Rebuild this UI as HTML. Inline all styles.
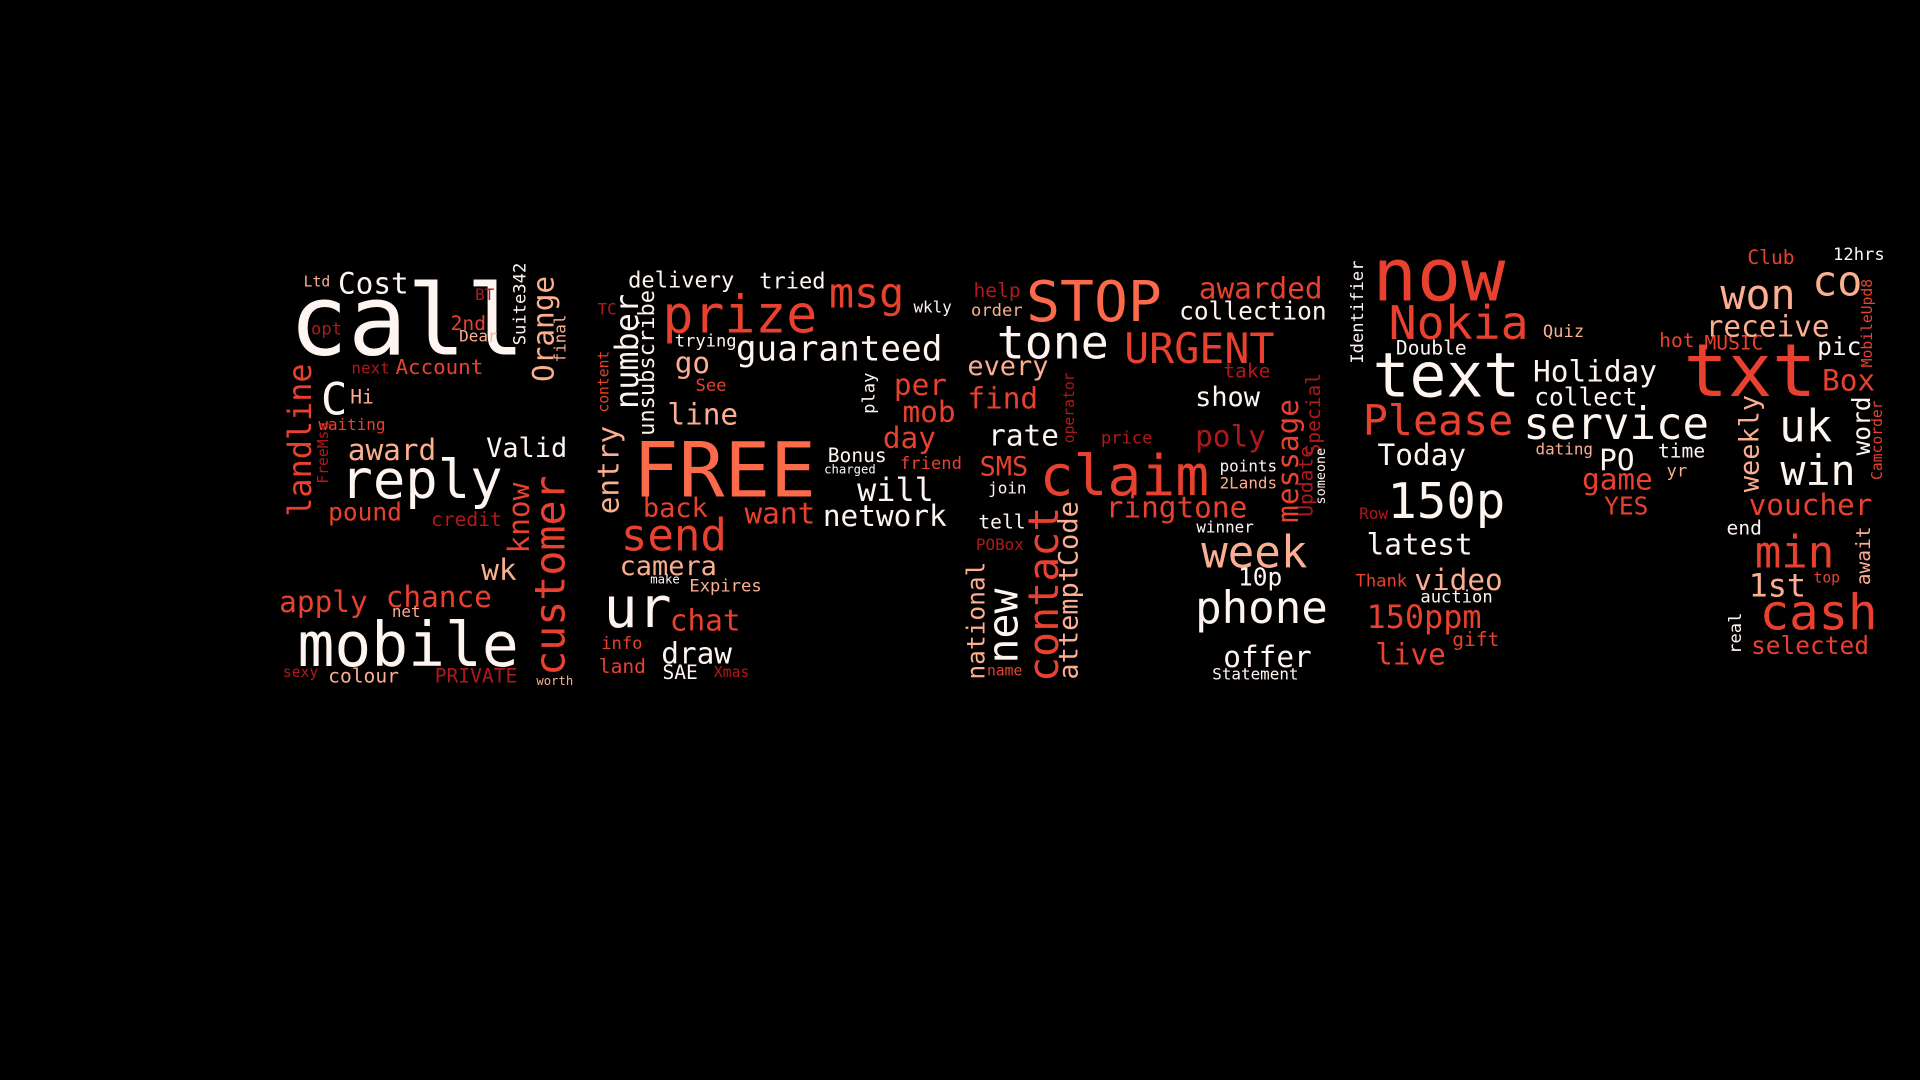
<!DOCTYPE html>
<html><head><meta charset="utf-8"><style>
html,body{margin:0;padding:0;background:#000;width:1920px;height:1080px;overflow:hidden}
#c{position:absolute;left:0;top:0;width:1568px;height:882px;transform:scale(1.22449);transform-origin:0 0;font-family:"DejaVu Sans Mono","Liberation Mono",monospace}
#c span{position:absolute;line-height:1;white-space:nowrap;transform:translateY(-0.845em)}
#c span.v{transform-origin:0 0;transform:rotate(-90deg)}
.w{color:#fff5f0}.p{color:#fcae91}.m{color:#fb6a4a}.r{color:#e8412f}.d{color:#b0191b}
</style></head><body><div id="c">
<span class="w" style="left:236px;top:290px;font-size:80px">call</span>
<span class="w" style="left:276px;top:240px;font-size:24px">Cost</span>
<span class="p" style="left:248px;top:234px;font-size:12px">Ltd</span>
<span class="v p" style="left:432px;top:312px;font-size:24px">Orange</span>
<span class="v w" style="left:418px;top:282px;font-size:14px">Suite342</span>
<span class="v p" style="left:452px;top:296px;font-size:13px">final</span>
<span class="d" style="left:388px;top:246px;font-size:13px">BT</span>
<span class="r" style="left:368px;top:270px;font-size:16px">2nd</span>
<span class="p" style="left:375px;top:280px;font-size:13px">Dear</span>
<span class="d" style="left:254px;top:274px;font-size:14px">opt</span>
<span class="d" style="left:287px;top:306px;font-size:13px">next</span>
<span class="r" style="left:323px;top:307px;font-size:17px">Account</span>
<span class="w" style="left:262px;top:340px;font-size:36px">C</span>
<span class="p" style="left:286px;top:330px;font-size:16px">Hi</span>
<span class="v r" style="left:233px;top:422px;font-size:26px">landline</span>
<span class="v d" style="left:258px;top:395px;font-size:12px">FreeMsg</span>
<span class="r" style="left:260px;top:352px;font-size:13px">waiting</span>
<span class="p" style="left:284px;top:376px;font-size:24px">award</span>
<span class="w" style="left:397px;top:375px;font-size:22px">Valid</span>
<span class="w" style="left:278px;top:408px;font-size:44px">reply</span>
<span class="r" style="left:268px;top:425px;font-size:20px">pound</span>
<span class="d" style="left:352px;top:430px;font-size:16px">credit</span>
<span class="v r" style="left:412px;top:452px;font-size:24px">know</span>
<span class="v r" style="left:433px;top:552px;font-size:34px">customer</span>
<span class="p" style="left:393px;top:474px;font-size:24px">wk</span>
<span class="r" style="left:228px;top:500px;font-size:24px">apply</span>
<span class="r" style="left:315px;top:496px;font-size:24px">chance</span>
<span class="w" style="left:243px;top:544px;font-size:50px">mobile</span>
<span class="p" style="left:320px;top:505px;font-size:13px">net</span>
<span class="d" style="left:231px;top:553px;font-size:12px">sexy</span>
<span class="p" style="left:268px;top:558px;font-size:16px">colour</span>
<span class="d" style="left:355px;top:558px;font-size:16px">PRIVATE</span>
<span class="p" style="left:438px;top:561px;font-size:10px">worth</span>

<span class="w" style="left:513px;top:236px;font-size:18px">delivery</span>
<span class="w" style="left:620px;top:237px;font-size:18px">tried</span>
<span class="r" style="left:541px;top:272px;font-size:42px">prize</span>
<span class="r" style="left:677px;top:252px;font-size:34px">msg</span>
<span class="w" style="left:746px;top:256px;font-size:13px">wkly</span>
<span class="v w" style="left:500px;top:334px;font-size:26px">number</span>
<span class="d" style="left:488px;top:258px;font-size:13px">TC</span>
<span class="w" style="left:551px;top:284px;font-size:14px">trying</span>
<span class="w" style="left:601px;top:295px;font-size:28px">guaranteed</span>
<span class="p" style="left:551px;top:305px;font-size:24px">go</span>
<span class="r" style="left:568px;top:320px;font-size:14px">See</span>
<span class="v r" style="left:487px;top:337px;font-size:12px">content</span>
<span class="v w" style="left:520px;top:356px;font-size:18px">unsubscribe</span>
<span class="v w" style="left:703px;top:338px;font-size:14px">play</span>
<span class="r" style="left:730px;top:323px;font-size:24px">per</span>
<span class="p" style="left:545px;top:347px;font-size:24px">line</span>
<span class="r" style="left:737px;top:345px;font-size:24px">mob</span>
<span class="v p" style="left:485px;top:420px;font-size:24px">entry</span>
<span class="m" style="left:517px;top:406px;font-size:62px">FREE</span>
<span class="r" style="left:721px;top:366px;font-size:24px">day</span>
<span class="w" style="left:676px;top:378px;font-size:16px">Bonus</span>
<span class="r" style="left:735px;top:384px;font-size:14px">friend</span>
<span class="w" style="left:673px;top:388px;font-size:10px">charged</span>
<span class="w" style="left:700px;top:410px;font-size:26px">will</span>
<span class="r" style="left:525px;top:424px;font-size:22px">back</span>
<span class="r" style="left:608px;top:428px;font-size:24px">want</span>
<span class="w" style="left:672px;top:430px;font-size:24px">network</span>
<span class="r" style="left:507px;top:451px;font-size:36px">send</span>
<span class="p" style="left:506px;top:471px;font-size:22px">camera</span>
<span class="w" style="left:531px;top:478px;font-size:10px">make</span>
<span class="p" style="left:563px;top:484px;font-size:14px">Expires</span>
<span class="w" style="left:493px;top:512px;font-size:46px">ur</span>
<span class="r" style="left:547px;top:515px;font-size:24px">chat</span>
<span class="r" style="left:491px;top:531px;font-size:14px">info</span>
<span class="w" style="left:540px;top:542px;font-size:24px">draw</span>
<span class="r" style="left:489px;top:550px;font-size:16px">land</span>
<span class="w" style="left:541px;top:555px;font-size:16px">SAE</span>
<span class="d" style="left:583px;top:553px;font-size:12px">Xmas</span>

<span class="d" style="left:795px;top:243px;font-size:16px">help</span>
<span class="m" style="left:838px;top:262px;font-size:46px">STOP</span>
<span class="r" style="left:979px;top:244px;font-size:24px">awarded</span>
<span class="p" style="left:793px;top:259px;font-size:14px">order</span>
<span class="w" style="left:963px;top:261px;font-size:20px">collection</span>
<span class="w" style="left:814px;top:293px;font-size:38px">tone</span>
<span class="r" style="left:918px;top:297px;font-size:34px">URGENT</span>
<span class="p" style="left:790px;top:308px;font-size:22px">every</span>
<span class="d" style="left:999px;top:309px;font-size:16px">take</span>
<span class="r" style="left:790px;top:334px;font-size:24px">find</span>
<span class="w" style="left:976px;top:333px;font-size:22px">show</span>
<span class="v r" style="left:1040px;top:427px;font-size:24px">message</span>
<span class="v d" style="left:1065px;top:372px;font-size:16px">Special</span>
<span class="w" style="left:807px;top:364px;font-size:24px">rate</span>
<span class="v d" style="left:867px;top:362px;font-size:12px">operator</span>
<span class="d" style="left:976px;top:365px;font-size:24px">poly</span>
<span class="d" style="left:899px;top:363px;font-size:14px">price</span>
<span class="r" style="left:849px;top:404px;font-size:46px">claim</span>
<span class="r" style="left:800px;top:390px;font-size:22px">SMS</span>
<span class="w" style="left:996px;top:386px;font-size:13px">points</span>
<span class="p" style="left:996px;top:400px;font-size:13px">2Lands</span>
<span class="w" style="left:807px;top:404px;font-size:13px">join</span>
<span class="v d" style="left:1059px;top:422px;font-size:16px">Update</span>
<span class="v w" style="left:1073px;top:412px;font-size:11px">someone</span>
<span class="r" style="left:903px;top:423px;font-size:24px">ringtone</span>
<span class="w" style="left:799px;top:432px;font-size:16px">tell</span>
<span class="v r" style="left:836px;top:557px;font-size:34px">contact</span>
<span class="v w" style="left:803px;top:542px;font-size:34px">new</span>
<span class="v p" style="left:787px;top:555px;font-size:20px">national</span>
<span class="v p" style="left:863px;top:555px;font-size:22px">attemptCode</span>
<span class="d" style="left:797px;top:450px;font-size:13px">POBox</span>
<span class="w" style="left:977px;top:436px;font-size:13px">winner</span>
<span class="p" style="left:981px;top:465px;font-size:36px">week</span>
<span class="w" style="left:1011px;top:478px;font-size:20px">10p</span>
<span class="w" style="left:976px;top:510px;font-size:36px">phone</span>
<span class="w" style="left:999px;top:545px;font-size:24px">offer</span>
<span class="w" style="left:990px;top:556px;font-size:13px">Statement</span>
<span class="r" style="left:806px;top:552px;font-size:12px">name</span>

<span class="r" style="left:1121px;top:246px;font-size:60px">now</span>
<span class="v w" style="left:1102px;top:297px;font-size:14px">Identifier</span>
<span class="r" style="left:1134px;top:277px;font-size:38px">Nokia</span>
<span class="w" style="left:1140px;top:290px;font-size:16px">Double</span>
<span class="w" style="left:1121px;top:324px;font-size:50px">text</span>
<span class="r" style="left:1113px;top:356px;font-size:34px">Please</span>
<span class="w" style="left:1252px;top:312px;font-size:24px">Holiday</span>
<span class="w" style="left:1253px;top:331px;font-size:20px">collect</span>
<span class="w" style="left:1244px;top:360px;font-size:36px">service</span>
<span class="w" style="left:1125px;top:380px;font-size:24px">Today</span>
<span class="w" style="left:1306px;top:384px;font-size:24px">PO</span>
<span class="p" style="left:1254px;top:372px;font-size:13px">dating</span>
<span class="p" style="left:1260px;top:276px;font-size:14px">Quiz</span>
<span class="w" style="left:1133px;top:424px;font-size:40px">150p</span>
<span class="r" style="left:1292px;top:400px;font-size:24px">game</span>
<span class="r" style="left:1310px;top:420px;font-size:20px">YES</span>
<span class="d" style="left:1110px;top:425px;font-size:13px">Row</span>
<span class="w" style="left:1116px;top:453px;font-size:24px">latest</span>
<span class="r" style="left:1107px;top:480px;font-size:14px">Thank</span>
<span class="p" style="left:1155px;top:482px;font-size:24px">video</span>
<span class="w" style="left:1160px;top:493px;font-size:14px">auction</span>
<span class="r" style="left:1116px;top:514px;font-size:26px">150ppm</span>
<span class="r" style="left:1123px;top:543px;font-size:24px">live</span>
<span class="r" style="left:1186px;top:528px;font-size:16px">gift</span>
<span class="w" style="left:1354px;top:374px;font-size:16px">time</span>
<span class="r" style="left:1355px;top:284px;font-size:16px">hot</span>
<span class="r" style="left:1392px;top:286px;font-size:16px">MUSIC</span>
<span class="p" style="left:1361px;top:390px;font-size:14px">yr</span>

<span class="r" style="left:1375px;top:324px;font-size:60px">txt</span>
<span class="p" style="left:1405px;top:253px;font-size:34px">won</span>
<span class="p" style="left:1480px;top:242px;font-size:34px">co</span>
<span class="r" style="left:1427px;top:216px;font-size:16px">Club</span>
<span class="w" style="left:1497px;top:213px;font-size:14px">12hrs</span>
<span class="p" style="left:1393px;top:275px;font-size:24px">receive</span>
<span class="w" style="left:1484px;top:290px;font-size:20px">pic</span>
<span class="r" style="left:1488px;top:319px;font-size:24px">Box</span>
<span class="v r" style="left:1519px;top:300px;font-size:12px">MobileUpd8</span>
<span class="w" style="left:1453px;top:362px;font-size:36px">uk</span>
<span class="v w" style="left:1510px;top:372px;font-size:20px">word</span>
<span class="v r" style="left:1527px;top:392px;font-size:12px">Camcorder</span>
<span class="v p" style="left:1419px;top:402px;font-size:22px">weekly</span>
<span class="w" style="left:1454px;top:397px;font-size:34px">win</span>
<span class="r" style="left:1428px;top:421px;font-size:24px">voucher</span>
<span class="w" style="left:1410px;top:437px;font-size:16px">end</span>
<span class="r" style="left:1433px;top:465px;font-size:36px">min</span>
<span class="v p" style="left:1514px;top:478px;font-size:16px">await</span>
<span class="p" style="left:1428px;top:488px;font-size:26px">1st</span>
<span class="r" style="left:1481px;top:476px;font-size:12px">top</span>
<span class="r" style="left:1437px;top:515px;font-size:40px">cash</span>
<span class="v w" style="left:1411px;top:534px;font-size:14px">real</span>
<span class="r" style="left:1430px;top:534px;font-size:20px">selected</span>
</div></body></html>
